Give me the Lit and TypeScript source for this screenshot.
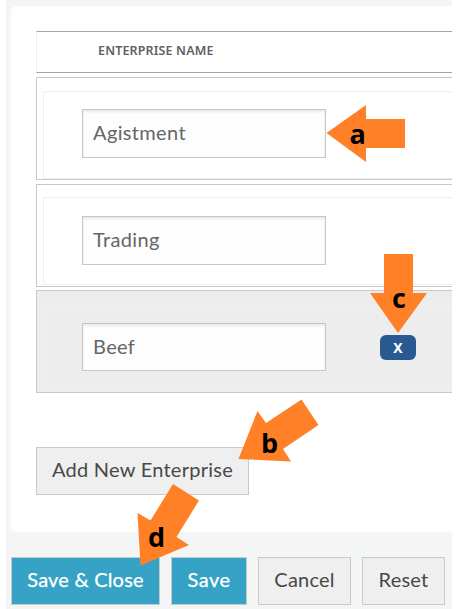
import { LitElement, html, css, svg, nothing } from "lit";
import { customElement, property } from "lit/decorators.js";

@customElement("enterprise-row")
class EnterpriseRow extends LitElement {
  @property() name = "";
  @property({ type: Boolean }) removable = false;

  static styles = css`
    :host { display: block; box-sizing: border-box; height: 103px; border: 1px solid #c8c8c8; border-right: 0; padding: 13px 0 0 6px; background: #fff; }
    :host([second]) { padding-top: 12px; }
    :host([removable]) { background: #ededed; }
    .cell { box-sizing: border-box; height: 88px; border: 1px solid #efefef; border-right: 0; padding: 17px 0 0 38px; display: flex; align-items: flex-start; }
    :host([second]) .cell { padding-top: 18px; }
    :host([removable]) .cell { border-color: #f0f0f0; padding-top: 18px; }
    .field { box-sizing: border-box; width: 244px; height: 49px; border: 1px solid #c6c6c6; background: #fdfdfd; box-shadow: inset 0 2px 3px rgba(0,0,0,.08); padding-left: 10px; font: 20px/45px Lato, sans-serif; letter-spacing: .35px; color: #666; white-space: nowrap; }
    :host([removable]) .field { height: 48px; }
    .remove { width: 36px; height: 25px; border-radius: 6px; margin: 12px 0 0 54px; background: #285a91; color: #fff; text-align: center; font: bold 14px/26px "Noto Sans", sans-serif; }
  `;

  render() {
    return html`<div class="cell">
      <div class="field">${this.name}</div>
      ${this.removable ? html`<div class="remove">X</div>` : nothing}
    </div>`;
  }
}

const arrows = [
  { label: "a", x: 349.5, y: 144, points: "326.5,133 366,105 366,119 405,119 405,148 366,148 366,162" },
  { label: "b", x: 261, y: 453, points: "238.5,459 257.5,411 266,423 301.5,399.5 318.5,425 283,449 291,461.5" },
  { label: "c", x: 392, y: 308, points: "384,254 413,254 413,293 427,293 398,333 370,293 384,293" },
  { label: "d", x: 148, y: 547, points: "140.5,565.5 137.5,513 150.5,520.5 173,484 199,500.5 176.5,537 189,545" },
];

@customElement("app-root")
class AppRoot extends LitElement {
  static styles = css`
    :host { display: block; position: relative; box-sizing: border-box; width: 459px; height: 609px; padding: 0 7px 0 6px; background: #fff; overflow: hidden; font-family: Lato, sans-serif; }
    .page { box-sizing: border-box; height: 609px; background: #f4f6f6; padding: 6px 0 0 5px; }
    .card { box-sizing: border-box; height: 526px; background: #fff; border-radius: 6px 0 0 6px; padding: 25px 0 0 25px; }
    .head { box-sizing: border-box; height: 42px; border-top: 1px solid #a5a5a5; border-bottom: 1px solid #a5a5a5; border-left: 1px solid #efefef; padding-left: 61px; color: #606060; font: 600 12.5px/37px "Noto Sans", sans-serif; letter-spacing: .15px; white-space: nowrap; }
    .rows { display: flex; flex-direction: column; padding-top: 4px; gap: 3px; }
    .rows > :first-child { margin-bottom: 1px; }
    .btn { box-sizing: border-box; height: 48px; border: 1px solid #c8caca; background: #efefef; color: #484848; font-size: 20px; line-height: 42px; letter-spacing: .2px; text-align: center; white-space: nowrap; }
    .add { width: 213px; margin-top: 54px; letter-spacing: .25px; }
    .actions { display: flex; gap: 11px; padding-top: 25px; }
    .primary { background: #36a3c6; color: #fff; -webkit-text-stroke: .25px #fff; }
    .save-close { width: 149px; }
    .save { width: 76px; letter-spacing: .5px; }
    .cancel { width: 93px; }
    .reset { width: 83px; }
    .marks { position: absolute; left: 0; top: 0; }
    .arrow { fill: #ff8027; }
    .letter { font: bold 27px "Open Sans", sans-serif; fill: #000; }
  `;

  render() {
    return html`
      <div class="page">
        <div class="card">
          <div class="head">ENTERPRISE NAME</div>
          <div class="rows">
            <enterprise-row name="Agistment"></enterprise-row>
            <enterprise-row name="Trading" second></enterprise-row>
            <enterprise-row name="Beef" removable></enterprise-row>
          </div>
          <div class="btn add">Add New Enterprise</div>
        </div>
        <div class="actions">
          <div class="btn primary save-close">Save &amp; Close</div>
          <div class="btn primary save">Save</div>
          <div class="btn cancel">Cancel</div>
          <div class="btn reset">Reset</div>
        </div>
      </div>
      <svg class="marks" width="459" height="609" viewBox="0 0 459 609">
        ${arrows.map((a) => svg`<polygon class="arrow" points=${a.points}></polygon><text class="letter" x=${a.x} y=${a.y}>${a.label}</text>`)}
      </svg>`;
  }
}
